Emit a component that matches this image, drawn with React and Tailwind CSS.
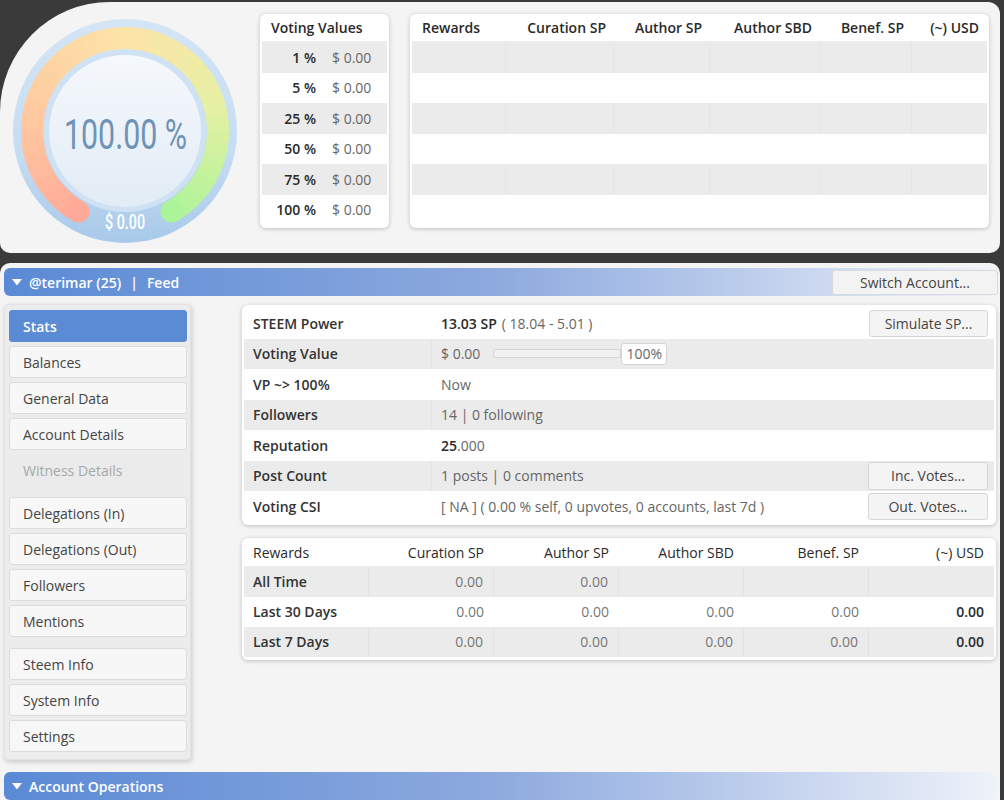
import React from 'react'

function Gauge() {
  const cx = 125
  const cy = 129
  const r = 93
  const stops = [
    [0, [255, 170, 152]],
    [0.22, [255, 200, 160]],
    [0.5, [253, 228, 168]],
    [0.75, [230, 240, 164]],
    [1, [172, 244, 152]],
  ]
  const colorAt = (t) => {
    for (let i = 0; i < stops.length - 1; i++) {
      const [t0, c0] = stops[i]
      const [t1, c1] = stops[i + 1]
      if (t >= t0 && t <= t1) {
        const k = (t - t0) / (t1 - t0)
        const c = c0.map((v, j) => Math.round(v + (c1[j] - v) * k))
        return `rgb(${c[0]},${c[1]},${c[2]})`
      }
    }
    return 'rgb(172,244,152)'
  }
  const pt = (deg) => {
    const a = (deg * Math.PI) / 180
    return [cx + r * Math.cos(a), cy + r * Math.sin(a)]
  }
  const n = 60
  const segs = []
  for (let i = 0; i < n; i++) {
    const a0 = 120 + (300 * i) / n
    const a1 = 120 + (300 * (i + 1)) / n + 0.6
    const [x0, y0] = pt(a0)
    const [x1, y1] = pt(a1)
    segs.push(
      <path
        key={i}
        d={`M ${x0} ${y0} A ${r} ${r} 0 0 1 ${x1} ${y1}`}
        stroke={colorAt((i + 0.5) / n)}
        strokeWidth="22"
        fill="none"
      />
    )
  }
  const [sx, sy] = pt(120)
  const [ex, ey] = pt(420)
  return (
    <svg width="250" height="251" viewBox="0 0 250 251" className="shrink-0">
      <defs>
        <linearGradient id="inner" x1="0" y1="0" x2="0" y2="1">
          <stop offset="0" stopColor="#f5f8fc" />
          <stop offset="1" stopColor="#e2ecf6" />
        </linearGradient>
        <linearGradient id="outer" x1="0" y1="0" x2="0" y2="1">
          <stop offset="0" stopColor="#d4e5f6" />
          <stop offset="0.6" stopColor="#c6ddf2" />
          <stop offset="1" stopColor="#a8c9ea" />
        </linearGradient>
        <filter id="soft" x="-10%" y="-10%" width="120%" height="120%">
          <feGaussianBlur stdDeviation="0.6" />
        </filter>
      </defs>
      <circle cx={cx} cy={cy} r="112" fill="url(#outer)" />
      <g filter="url(#soft)">
        {segs}
        <circle cx={sx} cy={sy} r="11" fill={colorAt(0)} />
        <circle cx={ex} cy={ey} r="11" fill={colorAt(1)} />
      </g>
      <circle cx={cx} cy={cy} r="81" fill="#cfe2f4" />
      <circle cx={cx} cy={cy} r="76" fill="url(#inner)" />
      <text
        x="64"
        y="147"
        textLength="123"
        lengthAdjust="spacingAndGlyphs"
        fontFamily="Roboto, sans-serif"
        fontWeight="400"
        fontSize="42"
        fill="#6f93b6"
      >
        100.00 %
      </text>
      <text
        x="105"
        y="227"
        textLength="40"
        lengthAdjust="spacingAndGlyphs"
        fontFamily="Roboto, sans-serif"
        fontWeight="500"
        fontSize="20"
        fill="#ffffff"
      >
        $ 0.00
      </text>
    </svg>
  )
}

function VotingValues() {
  const rows = ['1 %', '5 %', '25 %', '50 %', '75 %', '100 %']
  return (
    <div className="ml-[10px] w-[129px] h-[214px] rounded-[6px] bg-white shadow-[0_1px_4px_rgba(0,0,0,0.22)] px-[2px]">
      <div className="h-[28px] pl-[9px] flex items-center text-[14px] font-semibold text-[#2a2a2a] border-b border-[#ececec]">
        Voting Values
      </div>
      {rows.map((p, i) => (
        <div key={p} className={`h-[30.5px] flex items-center text-[14px] ${i % 2 === 0 ? 'bg-[#ebebeb]' : 'bg-white'}`}>
          <span className="w-[64px] pr-[10px] text-right font-semibold text-[#2a2a2a]">{p}</span>
          <span className="pl-[6px] text-[#666]">$ 0.00</span>
        </div>
      ))}
    </div>
  )
}

function TopRewards() {
  const cols = [
    ['Rewards', 'w-[94px] pl-[10px] text-left'],
    ['Curation SP', 'w-[108px] pr-[8px] text-right'],
    ['Author SP', 'w-[96px] pr-[8px] text-right'],
    ['Author SBD', 'w-[110px] pr-[8px] text-right'],
    ['Benef. SP', 'w-[92px] pr-[8px] text-right'],
    ['(~) USD', 'flex-1 pr-[8px] text-right'],
  ]
  return (
    <div className="ml-[21px] w-[579px] h-[214px] rounded-[6px] bg-white shadow-[0_1px_4px_rgba(0,0,0,0.22)] px-[2px]">
      <div className="h-[28px] flex items-center text-[14px] font-semibold text-[#2a2a2a] border-b border-[#ececec]">
        {cols.map(([c, cls]) => (
          <div key={c} className={cls}>{c}</div>
        ))}
      </div>
      {[0, 1, 2, 3, 4, 5].map((i) => (
        <div key={i} className={`h-[30.5px] flex ${i % 2 === 0 ? 'bg-[#ebebeb]' : 'bg-white'}`}>
          {cols.map(([c, cls]) => (
            <div key={c} className={`${cls} ${i % 2 === 0 ? 'border-r border-[#e6e6e6] last:border-r-0' : ''}`} />
          ))}
        </div>
      ))}
    </div>
  )
}

function SideButton({ label, active, disabled }) {
  let cls = 'bg-[#f7f7f7] border-[#dcdcdc] text-[#444]'
  if (active) cls = 'bg-[#5b8bd5] border-[#5b8bd5] text-white font-semibold'
  if (disabled) cls = 'bg-[#ebebeb] border-[#ebebeb] text-[#a8a8a8]'
  return (
    <div className={`h-[32px] rounded-[3px] border px-[13px] flex items-center text-[14px] ${cls}`}>
      {label}
    </div>
  )
}

function Sidebar() {
  const groups = [
    [['Stats', true], ['Balances'], ['General Data'], ['Account Details'], ['Witness Details', false, true]],
    [['Delegations (In)'], ['Delegations (Out)'], ['Followers'], ['Mentions']],
    [['Steem Info'], ['System Info'], ['Settings']],
  ]
  return (
    <div className="w-[188px] rounded-[4px] bg-[#ececec] border border-[#e2e2e2] shadow-[1px_2px_5px_rgba(0,0,0,0.18)] pl-[4px] pr-[3px] pt-[5px] pb-[7px] flex flex-col gap-[11px]">
      {groups.map((g, gi) => (
        <div key={gi} className="flex flex-col gap-[4px]">
          {g.map(([label, active, disabled]) => (
            <SideButton key={label} label={label} active={active} disabled={disabled} />
          ))}
        </div>
      ))}
    </div>
  )
}

function Btn({ children, className = '' }) {
  return (
    <div className={`h-[27px] w-[119px] rounded-[3px] border border-[#d6d6d6] bg-[#f4f4f4] flex items-center justify-center text-[14px] text-[#444] ${className}`}>
      {children}
    </div>
  )
}

function StatRow({ label, children, gray, right }) {
  return (
    <div className={`h-[30.5px] flex items-center text-[14px] ${gray ? 'bg-[#ebebeb]' : 'bg-white'}`}>
      <div className={`w-[188px] h-full flex items-center pl-[9px] font-semibold text-[#333] ${gray ? 'border-r border-[#e3e3e3]' : ''}`}>
        {label}
      </div>
      <div className="flex-1 pl-[9px] text-[#666] flex items-center">{children}</div>
      {right && <div className="pr-[6px]">{right}</div>}
    </div>
  )
}

function Stats() {
  return (
    <div className="rounded-[6px] bg-white shadow-[0_1px_4px_rgba(0,0,0,0.22)] px-[2px] py-[3px]">
      <StatRow label="STEEM Power" right={<Btn>Simulate SP...</Btn>}>
        <span className="text-[#2a2a2a] font-semibold">13.03 SP</span>
        <span className="ml-[5px]">( 18.04 - 5.01 )</span>
      </StatRow>
      <StatRow label="Voting Value" gray>
        <span>$ 0.00</span>
        <div className="ml-[13px] w-[128px] h-[9px] rounded-l-[3px] border border-[#d4d4d4] bg-[#f1f1f1]" />
        <div className="h-[22px] w-[46px] rounded-[3px] border border-[#d4d4d4] bg-white flex items-center justify-center">100%</div>
      </StatRow>
      <StatRow label="VP ~> 100%">Now</StatRow>
      <StatRow label="Followers" gray>14 | 0 following</StatRow>
      <StatRow label="Reputation">
        <span className="text-[#2a2a2a] font-semibold">25</span>.000
      </StatRow>
      <StatRow label="Post Count" gray right={<Btn className="w-[120px] h-[28px]">Inc. Votes...</Btn>}>
        1 posts | 0 comments
      </StatRow>
      <StatRow label="Voting CSI" right={<Btn className="w-[120px]">Out. Votes...</Btn>}>
        [ NA ] ( 0.00 % self, 0 upvotes, 0 accounts, last 7d )
      </StatRow>
    </div>
  )
}

function Rewards() {
  const heads = ['Curation SP', 'Author SP', 'Author SBD', 'Benef. SP', '(~) USD']
  const rows = [
    ['All Time', ['0.00', '0.00', '', '', '']],
    ['Last 30 Days', ['0.00', '0.00', '0.00', '0.00', '0.00']],
    ['Last 7 Days', ['0.00', '0.00', '0.00', '0.00', '0.00']],
  ]
  return (
    <div className="mt-[13px] rounded-[6px] bg-white shadow-[0_1px_4px_rgba(0,0,0,0.22)] px-[2px] pt-[2px] pb-[3px]">
      <div className="h-[27px] flex items-center text-[14px] text-[#2a2a2a] border-b border-[#ececec]">
        <div className="w-[125px] pl-[9px]">Rewards</div>
        {heads.map((h) => (
          <div key={h} className="w-[125px] pr-[10px] text-right">{h}</div>
        ))}
      </div>
      {rows.map(([label, vals], i) => (
        <div key={label} className={`h-[30px] flex items-center text-[14px] ${i % 2 === 0 ? 'bg-[#ebebeb]' : 'bg-white'}`}>
          <div className={`w-[125px] h-full flex items-center pl-[9px] font-semibold text-[#333] ${i % 2 === 0 ? 'border-r border-[#e2e2e2]' : ''}`}>{label}</div>
          {vals.map((v, j) => (
            <div
              key={j}
              className={`w-[125px] h-full flex items-center justify-end pr-[10px] ${j < 4 && i % 2 === 0 ? 'border-r border-[#e2e2e2]' : ''} ${j === 4 ? 'text-[#2a2a2a] font-semibold' : 'text-[#777]'}`}
            >
              {v}
            </div>
          ))}
        </div>
      ))}
    </div>
  )
}

function Bar({ children }) {
  return (
    <div className="h-[28px] rounded-[6px] bg-gradient-to-r from-[#5a8ad5] via-[#8eaade] to-[#eef2f9] flex items-center pl-[8px] text-[14px] font-semibold text-white">
      <svg width="10" height="8" viewBox="0 0 10 8" className="mr-[7px]">
        <path d="M0 1 L10 1 L5 7.5 Z" fill="#fff" />
      </svg>
      {children}
    </div>
  )
}

export default function App() {
  return (
    <div className="w-[1004px] h-[800px] overflow-hidden bg-[#3a3a3a] font-['Open_Sans',sans-serif] pt-[2px]">
      <div className="w-[1000px] h-[251px] bg-[#f4f4f4] rounded-tl-[110px] rounded-tr-[12px] rounded-b-[10px] flex items-start pt-[12px]">
        <div className="-mt-[12px]">
          <Gauge />
        </div>
        <VotingValues />
        <TopRewards />
      </div>
      <div className="mt-[10px] w-[1000px] h-[600px] bg-[#f4f4f4] rounded-t-[10px] px-[4px] pt-[5px]">
        <div className="relative">
          <Bar>
            <span>@terimar (25)</span>
            <span className="mx-[9px]">|</span>
            <span>Feed</span>
          </Bar>
          <div className="absolute right-[-2px] top-[2px] h-[25px] w-[166px] rounded-[3px] border border-[#dadada] bg-[#f3f3f3] flex items-center justify-center text-[14px] text-[#444]">
            Switch Account...
          </div>
        </div>
        <div className="mt-[8px] flex items-start">
          <Sidebar />
          <div className="ml-[51px] mt-[1px] flex-1">
            <Stats />
            <Rewards />
          </div>
        </div>
        <div className="mt-[12px]">
          <Bar>Account Operations</Bar>
        </div>
      </div>
    </div>
  )
}
